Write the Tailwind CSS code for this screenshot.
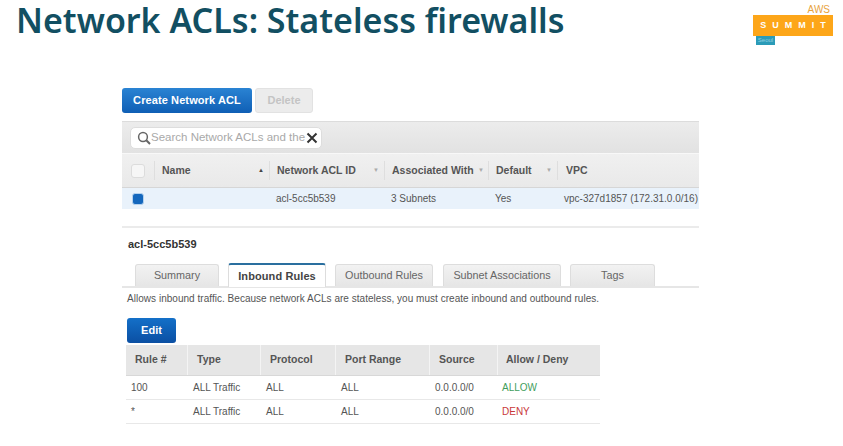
<!DOCTYPE html>
<html lang="en">
<head>
<meta charset="UTF-8" />
<title>Network ACLs: Stateless firewalls</title>
<script src="https://cdn.jsdelivr.net/npm/@tailwindcss/browser@4"></script>
</head>
<body class="bg-white w-[843px] h-[446px] overflow-hidden font-['Liberation_Sans',sans-serif]">

<!-- Slide title + logo -->
<header class="h-[88px] flex justify-between pl-[16px] pr-[10px]">
  <h1 class="font-['Noto_Sans',sans-serif] font-semibold text-[34px] leading-[41px] text-[#124f62] whitespace-nowrap">Network ACLs: Stateless firewalls</h1>
  <div class="w-[80px] pt-[4px]">
    <div class="h-[11px] pr-[3px] text-right text-[10px] leading-[11px] text-[#e8a33d]">AWS</div>
    <div class="h-[21px] bg-[#fda619] flex items-center justify-center gap-[6px] text-white font-bold text-[9px]">
      <span>S</span><span>U</span><span>M</span><span>M</span><span>I</span><span>T</span>
    </div>
    <div class="ml-[3px] w-[19px] h-[9px] bg-[#2b9bb8] text-[6px] leading-[9px] text-center text-[#8fd0e0]">Seoul</div>
  </div>
</header>

<main class="ml-[122px] w-[577px]">
  <!-- Action buttons -->
  <div class="flex gap-[3px] h-[33px]">
    <button class="w-[130px] h-[25px] rounded-[3px] bg-gradient-to-b from-[#2a83d3] to-[#0f5fb5] text-white font-bold text-[11px] tracking-[0.1px]">Create Network ACL</button>
    <button class="w-[58px] h-[25px] rounded-[3px] bg-[#ececec] border border-[#e2e2e2] text-[#c4c4c4] font-bold text-[11px]">Delete</button>
  </div>

  <!-- Search bar -->
  <div class="h-[32px] bg-gradient-to-b from-[#ececec] to-[#e2e2e2] border-t border-[#dcdcdc] flex items-center pl-[8px]">
    <div class="w-[192px] h-[22px] rounded-[5px] bg-white border border-[#dddddd] flex items-center pl-[6px]">
      <svg class="w-[14px] h-[14px] shrink-0" viewBox="0 0 14 14" fill="none" stroke="#666666"><circle cx="6" cy="6" r="4.4" stroke-width="1.5"/><path d="M9.3 9.3L13 13" stroke-width="2"/></svg>
      <span class="w-[155px] shrink-0 text-[11.5px] text-[#a9a9a9] whitespace-nowrap">Search Network ACLs and the</span>
      <svg class="w-[12px] h-[12px] shrink-0" viewBox="0 0 12 12" stroke="#333333" stroke-width="2"><path d="M1.5 1.5L10.5 10.5M10.5 1.5L1.5 10.5"/></svg>
    </div>
  </div>

  <!-- ACL table -->
  <div class="h-[35px] bg-gradient-to-b from-[#f0f0f0] to-[#e9e9e9] border-t border-[#f8f8f8] border-b-[#d6d6d6] border-b flex items-center text-[10.5px] font-bold text-[#555555]">
    <div class="w-[32px] pl-[9px] shrink-0"><div class="w-[14px] h-[14px] rounded-[3px] bg-[#f6f6f6] border border-[#dcdcdc]"></div></div>
    <div class="w-[115px] h-[19px] border-l border-[#dedede] pl-[7px] pr-[5px] flex items-center justify-between shrink-0"><span>Name</span><span class="text-[6px] text-[#444444]">▲</span></div>
    <div class="w-[115px] h-[19px] border-l border-[#dedede] pl-[7px] pr-[5px] flex items-center justify-between shrink-0"><span>Network ACL ID</span><span class="text-[6px] text-[#aaaaaa]">▼</span></div>
    <div class="w-[104px] h-[19px] border-l border-[#dedede] pl-[7px] pr-[4px] flex items-center justify-between shrink-0"><span class="whitespace-nowrap">Associated With</span><span class="text-[6px] text-[#aaaaaa]">▼</span></div>
    <div class="w-[69px] h-[19px] border-l border-[#dedede] pl-[7px] pr-[5px] flex items-center justify-between shrink-0"><span>Default</span><span class="text-[6px] text-[#aaaaaa]">▼</span></div>
    <div class="h-[19px] border-l border-[#dedede] pl-[8px] flex items-center"><span>VPC</span></div>
  </div>
  <div class="h-[21px] bg-[#e9f2fb] flex items-center text-[10px] text-[#555555]">
    <div class="w-[147px] pl-[10px] shrink-0"><div class="w-[12px] h-[12px] rounded-[3px] bg-[#1467bd] border border-[#b5d2ee]"></div></div>
    <div class="w-[115px] pl-[7px] shrink-0">acl-5cc5b539</div>
    <div class="w-[104px] pl-[7px] shrink-0">3 Subnets</div>
    <div class="w-[69px] pl-[7px] shrink-0">Yes</div>
    <div class="pl-[7px] whitespace-nowrap">vpc-327d1857 (172.31.0.0/16)</div>
  </div>

  <!-- Detail pane -->
  <div class="mt-[17px] border-t-2 border-[#ebebeb] pt-[9px] h-[38px]">
    <div class="pl-[6px] text-[11px] leading-[14px] font-bold text-[#333333]">acl-5cc5b539</div>
  </div>
  <div class="h-[22px] flex gap-[9px] pl-[13px] border-b-2 border-[#e6e6e6] box-content text-[10.8px]">
    <div class="w-[84px] h-[22px] rounded-t-[3px] bg-gradient-to-b from-[#f2f2f2] to-[#e6e6e6] border border-b-0 border-[#dddddd] flex items-center justify-center text-[#666666]">Summary</div>
    <div class="w-[98px] h-[24px] -mt-[1px] rounded-t-[3px] bg-white border border-b-0 border-[#dddddd] border-t-2 border-t-[#2a6f9f] flex items-center justify-center font-bold text-[11px] tracking-[0.1px] text-[#444444]">Inbound Rules</div>
    <div class="w-[98px] h-[22px] rounded-t-[3px] bg-gradient-to-b from-[#f2f2f2] to-[#e6e6e6] border border-b-0 border-[#dddddd] flex items-center justify-center text-[#666666]">Outbound Rules</div>
    <div class="w-[118px] h-[22px] ml-[1px] rounded-t-[3px] bg-gradient-to-b from-[#f2f2f2] to-[#e6e6e6] border border-b-0 border-[#dddddd] flex items-center justify-center text-[#666666]">Subnet Associations</div>
    <div class="w-[85px] h-[22px] rounded-t-[3px] bg-gradient-to-b from-[#f2f2f2] to-[#e6e6e6] border border-b-0 border-[#dddddd] flex items-center justify-center text-[#666666]">Tags</div>
  </div>
  <p class="pl-[5px] mt-[4px] h-[26px] text-[10px] leading-[14px] tracking-[0.03px] text-[#555555] whitespace-nowrap">Allows inbound traffic. Because network ACLs are stateless, you must create inbound and outbound rules.</p>

  <button class="ml-[5px] block w-[49px] h-[25px] rounded-[3px] bg-gradient-to-b from-[#1470c8] to-[#0b4fa3] text-white font-bold text-[11px]">Edit</button>

  <!-- Rules table -->
  <div class="ml-[4px] mt-[2px] w-[474px] text-[10px] text-[#555555]">
    <div class="h-[31px] bg-[#e6e6e6] border-b border-[#d8d8d8] flex items-center font-bold text-[10.5px] text-[#555555]">
      <div class="w-[62px] h-full flex items-center pl-[9px] border-r border-[#f4f4f4]">Rule #</div>
      <div class="w-[73px] h-full flex items-center pl-[9px] border-r border-[#f4f4f4]">Type</div>
      <div class="w-[75px] h-full flex items-center pl-[9px] border-r border-[#f4f4f4]">Protocol</div>
      <div class="w-[94px] h-full flex items-center pl-[9px] border-r border-[#f4f4f4]">Port Range</div>
      <div class="w-[68px] h-full flex items-center pl-[9px] border-r border-[#f4f4f4]">Source</div>
      <div class="flex-1 h-full flex items-center pl-[8px]">Allow / Deny</div>
    </div>
    <div class="h-[24px] border-b border-[#e8e8e8] flex items-center">
      <div class="w-[62px] pl-[5px]">100</div>
      <div class="w-[73px] pl-[5px]">ALL Traffic</div>
      <div class="w-[75px] pl-[5px]">ALL</div>
      <div class="w-[94px] pl-[5px]">ALL</div>
      <div class="w-[68px] pl-[5px]">0.0.0.0/0</div>
      <div class="flex-1 pl-[4px] text-[#3f9e5c]">ALLOW</div>
    </div>
    <div class="h-[24px] border-b border-[#e8e8e8] flex items-center">
      <div class="w-[62px] pl-[5px]">*</div>
      <div class="w-[73px] pl-[5px]">ALL Traffic</div>
      <div class="w-[75px] pl-[5px]">ALL</div>
      <div class="w-[94px] pl-[5px]">ALL</div>
      <div class="w-[68px] pl-[5px]">0.0.0.0/0</div>
      <div class="flex-1 pl-[4px] text-[#c9383a]">DENY</div>
    </div>
  </div>
</main>
</body>
</html>
